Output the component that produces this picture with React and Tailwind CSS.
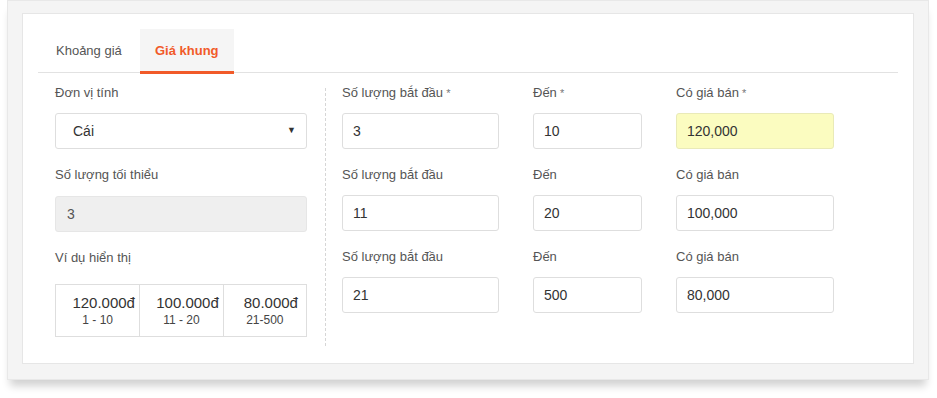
import React from "react";

const font = { fontFamily: '"Liberation Sans", Arial, sans-serif' };

const rows = [
  { start: "3", end: "10", price: "120,000", required: true },
  { start: "11", end: "20", price: "100,000" },
  { start: "21", end: "500", price: "80,000" },
];

function Field({ label, required, value, width, highlight }) {
  return (
    <div className={width}>
      <div className="h-[18px] text-[13px] leading-[18px] text-[#555]">
        {label}
        {required && <span className="text-[11px] text-[#777]"> *</span>}
      </div>
      <div
        className={`mt-[11px] h-[36px] rounded-[3px] border px-[10px] flex items-center text-[14px] text-[#333] ${
          highlight ? "bg-[#fbfcc0] border-[#e9eab8]" : "bg-white border-[#dedede]"
        }`}
      >
        {value}
      </div>
    </div>
  );
}

export default function App() {
  return (
    <div className="min-h-[398px] bg-white pl-[7px]" style={font}>
      <div className="w-[922px] h-[380px] bg-[#f4f4f4] border border-[#e8e8e8] pt-[12px] px-[14px] shadow-[0_9px_8px_-3px_rgba(0,0,0,0.18)]">
        <div className="h-[351px] bg-white border border-[#e6e6e6] pt-[15px]">
          {/* tabs */}
          <div className="mx-[15px] flex border-b border-[#e2e2e2] h-[44px]">
            <div className="px-[18px] flex items-center text-[13px] text-[#555]">Khoảng giá</div>
            <div className="relative w-[94px] bg-[#f5f5f5] flex items-center justify-center text-[13px] font-bold text-[#f15a29]">
              Giá khung
              <div className="absolute left-0 right-0 bottom-[-2px] h-[3px] bg-[#f15a29]" />
            </div>
          </div>

          <div className="flex pl-[32px] pt-[11px]">
            {/* left column */}
            <div className="w-[252px]">
              <div className="h-[18px] text-[13px] leading-[18px] text-[#555]">Đơn vị tính</div>
              <div className="mt-[11px] h-[36px] rounded-[3px] border border-[#dedede] pl-[17px] pr-[10px] flex items-center justify-between text-[14px] text-[#333]">
                <span>Cái</span>
                <span className="text-[9px] text-[#333]">▼</span>
              </div>

              <div className="mt-[17px] h-[18px] text-[13px] leading-[18px] text-[#555]">Số lượng tối thiểu</div>
              <div className="mt-[12px] h-[36px] rounded-[3px] border border-[#e6e6e6] bg-[#efefef] px-[11px] flex items-center text-[14px] text-[#555]">
                3
              </div>

              <div className="mt-[17px] h-[18px] text-[13px] leading-[18px] text-[#555]">Ví dụ hiển thị</div>
              <div className="mt-[17px] grid grid-cols-3 border border-[#dedede] h-[53px]">
                {[
                  ["120.000đ", "1 - 10"],
                  ["100.000đ", "11 - 20"],
                  ["80.000đ", "21-500"],
                ].map(([p, r], i) => (
                  <div
                    key={p}
                    className={`flex flex-col items-center justify-center ${i > 0 ? "border-l border-[#dedede]" : ""}`}
                  >
                    <div className="ml-[12px] text-[15px] leading-[18px] text-[#333]">{p}</div>
                    <div className="text-[12px] leading-[16px] text-[#444]">{r}</div>
                  </div>
                ))}
              </div>
            </div>

            {/* divider */}
            <div className="ml-[18px] mt-[4px] h-[258px] border-l border-dashed border-[#d6d6d6]" />

            {/* right grid */}
            <div className="ml-[16px] flex flex-col gap-[17px]">
              {rows.map((r, i) => (
                <div key={i} className="flex gap-[34px]">
                  <Field width="w-[157px]" label="Số lượng bắt đầu" required={r.required} value={r.start} />
                  <Field width="w-[109px]" label="Đến" required={r.required} value={r.end} />
                  <Field width="w-[158px]" label="Có giá bán" required={r.required} value={r.price} highlight={i === 0} />
                </div>
              ))}
            </div>
          </div>
        </div>
      </div>
    </div>
  );
}
